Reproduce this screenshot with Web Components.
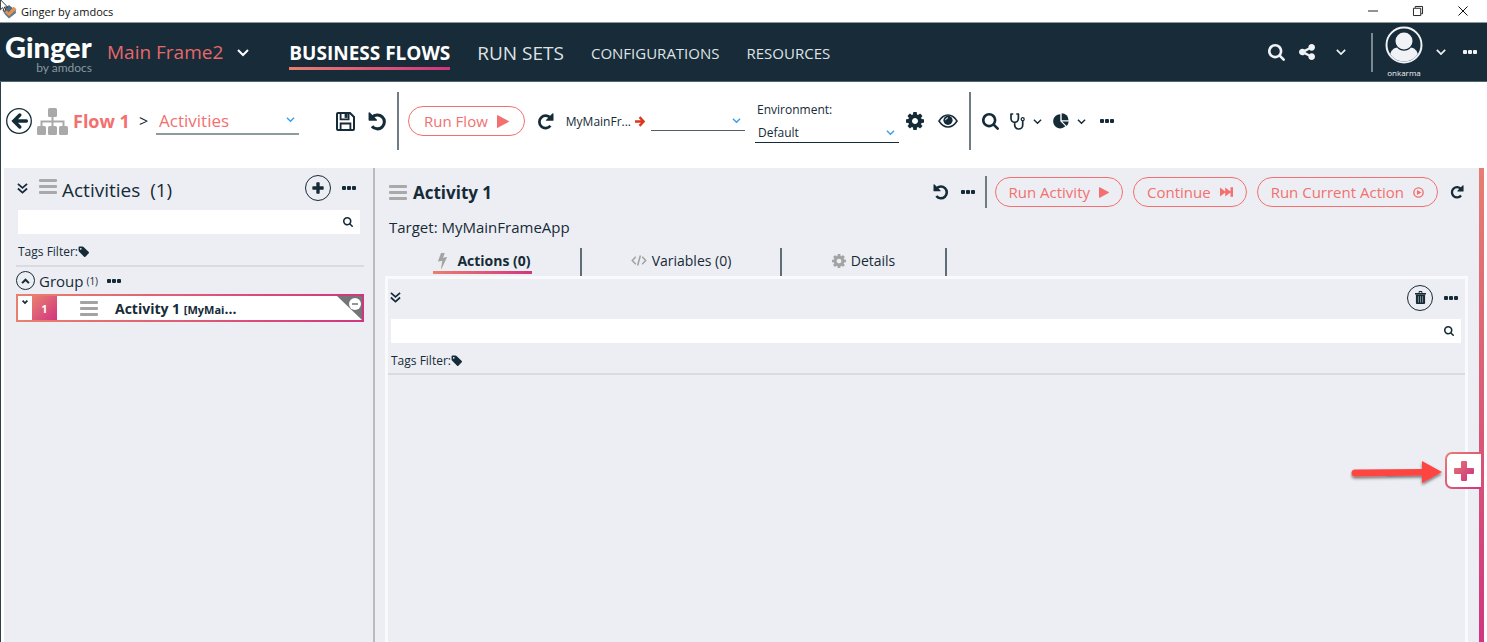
<!DOCTYPE html>
<html lang="en">
<head>
<meta charset="utf-8">
<title>Ginger by amdocs</title>
<style>
html, body { margin: 0; height: 100%; }
body {
  font-family: "Open Sans", "Noto Sans", sans-serif;
  color: #152b37;
  background: #fff;
  --ink: #152b37;
  --coral: #f2706f;
  --pane: #edeef3;
  --warm: #e9806f;
  --pink: #d1357f;
  --grad: linear-gradient(135deg, var(--warm), var(--pink));
}
</style>
</head>
<body>
<ginger-app></ginger-app>
<script>
const stroke = (w, d, extra = '') => `<path d="${d}" fill="none" stroke="currentColor" stroke-width="${w}" ${extra}/>`;
const COG = 'M1152 896q0-106-75-181t-181-75-181 75-75 181 75 181 181 75 181-75 75-181zm512-109v222q0 12-8 23t-20 13l-185 28q-19 54-39 91 35 50 107 138 10 12 10 25t-9 23q-27 37-99 108t-94 71q-12 0-26-9l-138-108q-44 23-91 38-16 136-29 186-7 28-36 28h-222q-14 0-24.5-8.5t-11.5-21.5l-28-184q-49-16-90-37l-141 107q-10 9-25 9-14 0-25-11-126-114-165-168-7-10-7-23 0-12 8-23 15-21 51-66.5t54-70.5q-27-50-41-99l-183-27q-13-2-21-12.5t-8-23.5v-222q0-12 8-23t19-13l186-28q14-46 39-92-40-57-107-138-10-12-10-24 0-10 9-23 26-36 98.5-107.5t94.5-71.5q13 0 26 10l138 107q44-23 91-38 16-136 29-186 7-28 36-28h222q14 0 24.5 8.5t11.5 21.5l28 184q49 16 90 37l142-107q9-9 24-9 13 0 25 10 129 119 165 170 7 8 7 22 0 12-8 23-15 21-51 66.5t-54 70.5q26 50 41 98l183 28q13 2 21 12.5t8 23.5z';
const ICONS = {
  search: ['64 128 1664 1664', '<path d="M1216 832q0-185-131.5-316.5t-316.5-131.5-316.5 131.5-131.5 316.5 131.5 316.5 316.5 131.5 316.5-131.5 131.5-316.5zm512 832q0 52-38 90t-90 38q-54 0-90-38l-343-342q-179 124-399 124-143 0-273.5-55.5t-225-150-150-225-55.5-273.5 55.5-273.5 150-225 225-150 273.5-55.5 273.5 55.5 225 150 150 225 55.5 273.5q0 220-124 399l343 343q37 37 37 90z"/>'],
  share: ['128 128 1536 1536', '<path d="M1344 1024q133 0 226.5 93.5t93.5 226.5-93.5 226.5-226.5 93.5-226.5-93.5-93.5-226.5q0-12 2-34l-360-180q-92 86-218 86-133 0-226.5-93.5t-93.5-226.5 93.5-226.5 226.5-93.5q126 0 218 86l360-180q-2-22-2-34 0-133 93.5-226.5t226.5-93.5 226.5 93.5 93.5 226.5-93.5 226.5-226.5 93.5q-126 0-218-86l-360 180q2 22 2 34t-2 34l360 180q92-86 218-86z"/>'],
  cog: ['128 128 1536 1536', `<path d="${COG}"/>`],
  tag: ['192 192 1452 1452', '<path d="M576 448q0-53-37.5-90.5t-90.5-37.5-90.5 37.5-37.5 90.5 37.5 90.5 90.5 37.5 90.5-37.5 37.5-90.5zm1067 576q0 53-37 90l-491 492q-39 37-91 37-53 0-90-37l-715-716q-38-37-64.5-101t-26.5-117v-416q0-52 38-90t90-38h416q53 0 117 26.5t102 64.5l715 714q37 39 37 91z"/>'],
  dots: ['0 0 14 4', '<rect width="4" height="4" rx="1"/><rect x="5" width="4" height="4" rx="1"/><rect x="10" width="4" height="4" rx="1"/>'],
  chevron: ['0 0 12 7', stroke(2, 'M1 1l5 5 5-5')],
  chevronup: ['0 0 10 7', stroke(2.4, 'M1 6l4-4 4 4')],
  fold: ['0 0 6 4', stroke(1.7, 'M.6.6L3 3 5.4.6')],
  double: ['0 0 12 12', stroke(1.9, 'M1 1l5 4.4L11 1M1 6l5 4.4L11 6')],
  menu: ['0 0 18 15', '<rect width="18" height="3" rx="1"/><rect y="6" width="18" height="3" rx="1"/><rect y="12" width="18" height="3" rx="1"/>'],
  back: ['0 0 26 26', '<circle cx="13" cy="13" r="12.3" fill="none" stroke="currentColor" stroke-width="1.3"/>' + stroke(3.4, 'M13.8 7l-6 6 6 6M8.4 13h12', 'stroke-linecap="round" stroke-linejoin="miter"')],
  sitemap: ['0 0 31 27', '<rect x="11" width="9" height="9" rx="1.5"/><rect y="18" width="9" height="9" rx="1.5"/><rect x="11" y="18" width="9" height="9" rx="1.5"/><rect x="22" y="18" width="9" height="9" rx="1.5"/>' + stroke(2, 'M15.5 8v11M4.5 19v-5.5h22V19')],
  save: ['0 0 19 19', stroke(2, 'M1 2q0-1 1-1h12l4 4v12q0 1-1 1H2q-1 0-1-1z') + stroke(1.8, 'M4.6 18v-6.5h9.8V18M4.6 1v6.3h8V1') + '<path d="M8.6 1.5h3v4.4h-3z"/>'],
  undo: ['0 0 20 20', stroke(3.2, 'M4.3 5.8A7.3 7.3 0 1 1 4.2 15') + '<path d="M.6.8v7.6q0 .8.8.8H9q1-.3.4-1L2 .6Q1-.2.6.8z"/>'],
  redo: ['0 0 20 20', '<g transform="translate(20 0) scale(-1 1)">' + stroke(3.2, 'M4.3 5.8A7.3 7.3 0 1 1 4.2 15') + '<path d="M.6.8v7.6q0 .8.8.8H9q1-.3.4-1L2 .6Q1-.2.6.8z"/></g>'],
  play: ['0 0 12 13', '<path d="M0 .6Q0-.2.8.2l10.800 5.800q.8.5 0 1L.8 12.800Q0 13.200 0 12.400z"/>'],
  forward: ['0 0 13 10', '<path d="M0 .5l5.200 4V.5l5.300 4V.3H13v9.400h-2.500V5.500l-5.300 4v-4L0 9.500z"/>'],
  playcircle: ['0 0 12 12', '<circle cx="6" cy="6" r="5.100" fill="none" stroke="currentColor" stroke-width="1.500"/><path d="M4.300 3.200L9.200 6l-4.900 2.800z"/>'],
  arrow: ['0 0 11 12', stroke(2.6, 'M0 6h9M5 1.200L9.500 6 5 10.800')],
  eye: ['0 0 20 14', stroke(1.5, 'M1 7q3.700-6 9-6t9 6q-3.700 6-9 6T1 7z') + '<circle cx="10" cy="6.300" r="4.600"/><path d="M7.600 6.200q0-2.200 2.400-2.400" fill="none" stroke="#fff" stroke-width="1"/>'],
  stetho: ['0 0 15 17', stroke(1.700, 'M3.200 1H1v4.500a3.700 3.900 0 0 0 7.400 0V1H6.300M4.700 9.500v2.700a4 3.800 0 0 0 8 0V8', 'stroke-linejoin="round"') + '<circle cx="12.700" cy="6.200" r="1.500" fill="none" stroke="currentColor" stroke-width="1.300"/>'],
  pie: ['0 0 16 16', '<path d="M7.300 1.200v7.100l5 5A7.100 7.100 0 1 1 7.300 1.200z"/><path d="M8.700.3a7 7 0 0 1 6.900 6.900H8.700z"/><path d="M9.200 8.500h6.500a7 7 0 0 1-2 4.500z"/>'],
  plus: ['0 0 18 18', '<path d="M6.500 1.500Q6.500.5 7.500.5h3q1 0 1 1v5h5q1 0 1 1v3q0 1-1 1h-5v5q0 1-1 1h-3q-1 0-1-1v-5h-5q-1 0-1-1v-3q0-1 1-1h5z"/>'],
  bolt: ['0 0 9 16', '<path d="M3 0h3.800L5 4.700l3.600-.6q.5 0 .2.600L3.700 15.500q-.5.700-.7 0l1.300-7.700-3.700.8q-.6 0-.5-.600z"/>'],
  code: ['0 0 17 12', stroke(1.700, 'M5 2L1.200 6 5 10M12 2l3.800 4L12 10M10 .5L7 11.500')],
  trash: ['0 0 12 14', '<path d="M4 2V.8Q4 0 4.800 0h2.400Q8 0 8 .8V2h4v1.600H0V2zM5 1v1h2V1zM1 4h10v9q0 1-1 1H2q-1 0-1-1z" fill-rule="evenodd"/><path d="M3.700 5.500v7M6 5.500v7M8.300 5.500v7" stroke="#9ba1a8" stroke-width=".9"/>'],
  min: ['0 0 11 11', stroke(1, 'M0 5.500h11')],
  restore: ['0 0 11 11', stroke(1, 'M.5 2.500h8v8h-8zM2.500 2V.5h8v8H9')],
  close: ['0 0 11 11', stroke(1.100, 'M.5.5l10 10M10.500.5l-10 10')],
  user: ['0 0 38 38', '<defs><clipPath id="c"><circle cx="19" cy="19" r="16.500"/></clipPath></defs><circle cx="19" cy="19" r="17.500" fill="none" stroke="currentColor" stroke-width="2"/><circle cx="19" cy="15" r="8.500"/><path clip-path="url(#c)" d="M4 34q1-12 8-12.500 3 3.300 7 3.300t7-3.300q7 .5 8 12.500-15 8-30 0z"/>'],
  brand: ['0 0 17 16', '<path d="M1.500 7L8.500 1l7.500 6-7.500 8z" fill="#4f7183"/><path d="M2.500 7l2.500-1.500 3 3.500L13.500 3l3 2.500L8.500 13z" fill="#ea9150"/><path d="M1.500 8.500l7 4.500 7-6 .5 2.500-7.500 6z" fill="#5f7f8e"/>'],
  cursor: ['0 0 11 16', '<path d="M.5-.5v12.500l2.800-2.600 2 4.600 2-.9-2-4.400h4z" fill="#fff" stroke="#111"/>']
};

function define(name, html, setup) {
  const t = document.createElement('template');
  t.innerHTML = `<style>*{box-sizing:border-box}:host{display:block}button,select,input{font:inherit;color:inherit;border:0;background:none;padding:0;margin:0;outline:0}button{display:flex;align-items:center;justify-content:center}a{color:inherit;text-decoration:none}h1,h2,p{margin:0;font-weight:400}</style>` + html;
  customElements.define(name, class extends HTMLElement {
    constructor() {
      super();
      this.attachShadow({ mode: 'open' }).append(t.content.cloneNode(true));
    }
    connectedCallback() { if (setup) setup(this, this.shadowRoot); }
  });
}

define('g-icon', `<style>:host{display:inline-flex;flex:none}svg{display:block;fill:currentColor;overflow:visible}</style><svg aria-hidden="true"></svg>`, (el, root) => {
  const [box, body] = ICONS[el.getAttribute('name')];
  const svg = root.querySelector('svg');
  const [, , w, h] = box.split(' ').map(Number);
  const width = Number(el.getAttribute('size') || w);
  svg.setAttribute('viewBox', box);
  svg.setAttribute('width', width);
  svg.setAttribute('height', Math.round(width * h / w));
  svg.innerHTML = body;
});

define('pill-button', `<style>
:host{display:block;flex:none}
button{height:30px;padding:0 var(--pill-pad,13px);gap:9px;border:1px solid var(--coral);border-radius:15px;color:var(--coral);font-size:15px;line-height:20px;white-space:nowrap}
</style><button><slot></slot></button>`);

define('line-select', `<style>
:host{display:block;position:relative;flex:none;border-bottom:1px solid #4f606a}
select{appearance:none;width:100%;height:100%;padding:0 20px 0 3px;display:block}
g-icon{position:absolute;right:4px;top:50%;margin-top:-3px;color:#3ba0ee;pointer-events:none}
</style><select><option></option></select><g-icon name="chevron" size="9"></g-icon>`, (el, root) => {
  root.querySelector('option').textContent = el.getAttribute('value') || '';
  root.querySelector('select').setAttribute('aria-label', el.getAttribute('label'));
});

define('search-box', `<style>
:host{display:block}
label{display:flex;align-items:center;height:24px;background:#fff;padding-right:7px}
input{flex:1;height:100%;padding:0 6px;font-size:12px}
</style><label><input type="text" aria-label="Search"><g-icon name="search" size="10"></g-icon></label>`);

define('tags-filter', `<style>
:host{display:flex;align-items:center;gap:1px;font-size:12px;line-height:18px}
</style><span>Tags Filter:</span><g-icon name="tag" size="10"></g-icon>`);

define('title-bar', `<style>
:host{display:flex;align-items:center;height:22px;background:#fff;color:#111;font-size:11px;position:relative;flex:none}
.brand{margin:0 4px 0 1px}
.cursor{position:absolute;left:0;top:0}
.win{margin-left:auto;display:flex;padding-right:2px}
.win button{width:45px;height:22px}
</style>
<g-icon class="brand" name="brand" size="16"></g-icon><span>Ginger by amdocs</span><g-icon class="cursor" name="cursor" size="9"></g-icon>
<div class="win"><button aria-label="Minimize"><g-icon name="min" size="10"></g-icon></button><button aria-label="Restore"><g-icon name="restore" size="10"></g-icon></button><button aria-label="Close"><g-icon name="close" size="10"></g-icon></button></div>`);

define('app-header', `<style>
:host{display:flex;align-items:center;height:60px;background:#172b38;border-top:1px solid #8e999f;border-bottom:1px solid #53636c;color:#dfe3e6;flex:none;padding-right:10px}
.logo{font-family:Lato,sans-serif;width:87px;margin-left:5px;white-space:nowrap}
.logo b{display:block;font-size:29px;line-height:32px;font-weight:900;color:#fff}
.logo small{display:block;font-size:12px;line-height:10px;color:#8b979f;text-align:right}
.solution{gap:14px;font-size:19px;color:#e8686a;margin-left:15px}
.solution g-icon{color:#fff}
nav{display:flex;align-items:center;gap:27px;margin-left:40px;font-size:15px;white-space:nowrap}
nav a{line-height:28px;border-bottom:3px solid transparent;padding-top:4px}
nav .big{font-size:19px}
nav .on{font-weight:700;color:#fff;border-image:linear-gradient(90deg,var(--warm),var(--pink)) 1}
.tools{margin-left:auto;display:flex;align-items:center;color:#f0f2f5}
.tools .bar{width:2px;height:39px;background:#7c888f;margin:0 12px 0 25px}
.user{display:flex;flex-direction:column;align-items:center;font-size:8px;line-height:10px;margin-right:13px}
</style>
<div class="logo"><b>Ginger</b><small>by amdocs</small></div>
<button class="solution">Main Frame2<g-icon name="chevron" size="12"></g-icon></button>
<nav><a class="big on" href="#flows">BUSINESS FLOWS</a><a class="big" href="#sets">RUN SETS</a><a href="#conf">CONFIGURATIONS</a><a href="#res">RESOURCES</a></nav>
<div class="tools">
<button aria-label="Search"><g-icon name="search" size="17"></g-icon></button>
<button aria-label="Share" style="margin:0 21px 0 14px"><g-icon name="share" size="16"></g-icon></button>
<button aria-label="More sharing"><g-icon name="chevron" size="10"></g-icon></button>
<span class="bar"></span>
<span class="user"><g-icon name="user" size="38"></g-icon><span style="padding-top:4px">onkarma</span></span>
<button aria-label="User menu" style="margin-right:17px"><g-icon name="chevron" size="10"></g-icon></button>
<button aria-label="More"><g-icon name="dots" size="14"></g-icon></button>
</div>`);

define('flow-toolbar', `<style>
:host{display:flex;align-items:center;height:86px;padding:0 0 8px 5px;flex:none;white-space:nowrap}
.flow{color:var(--coral);font-size:18px;font-weight:700;margin:0 9px 0 5px}
.sitemap{color:#a9a9a9;margin-left:5px}
.crumb{width:143px;height:28px;color:var(--coral);margin-left:8px;font-size:17px;border-bottom:2px solid #8d9b9c}
.bar{width:2px;height:58px;background:#6f7c84;flex:none}
.target{font-size:12px}
.env{display:flex;flex-direction:column;width:144px;font-size:12px;margin:2px 7px 0 10px}
.env span{line-height:17px;padding-left:2px}
.env line-select{height:20px;margin-top:5px;border-color:var(--ink)}
</style>
<button aria-label="Back"><g-icon name="back" size="26"></g-icon></button>
<g-icon class="sitemap" name="sitemap" size="31"></g-icon>
<span class="flow">Flow 1</span><span>&gt;</span>
<line-select class="crumb" label="Flow section" value="Activities"></line-select>
<button aria-label="Save" style="margin:0 13px 0 37px"><g-icon name="save" size="19"></g-icon></button>
<button aria-label="Undo"><g-icon name="undo" size="19"></g-icon></button>
<span class="bar" style="margin:0 9px 0 10px"></span>
<pill-button style="--pill-pad:15px">Run Flow<g-icon name="play" size="12"></g-icon></pill-button>
<button aria-label="Reset" style="margin:0 12px"><g-icon name="redo" size="17"></g-icon></button>
<span class="target">MyMainFr...</span><g-icon name="arrow" size="10" style="color:#d9391f;margin:0 6px 0 4px"></g-icon>
<line-select label="Agent" style="width:94px;height:20px"></line-select>
<div class="env"><span>Environment:</span><line-select label="Environment" value="Default"></line-select></div>
<button aria-label="Settings"><g-icon name="cog" size="18"></g-icon></button>
<button aria-label="View" style="margin:0 11px 0 14px"><g-icon name="eye" size="20"></g-icon></button>
<span class="bar" style="margin-right:11px"></span>
<button aria-label="Find"><g-icon name="search" size="17"></g-icon></button>
<button aria-label="Analyze" style="margin-left:11px;gap:8px"><g-icon name="stetho" size="15"></g-icon><g-icon name="chevron" size="9"></g-icon></button>
<button aria-label="Reports" style="margin:0 14px 0 11px;gap:8px"><g-icon name="pie" size="16"></g-icon><g-icon name="chevron" size="9"></g-icon></button>
<button aria-label="More"><g-icon name="dots" size="14"></g-icon></button>`);

define('activity-item', `<style>
:host{display:flex;height:28px;border:2px solid;border-image:linear-gradient(90deg,var(--warm),var(--pink)) 1;background:#fff;position:relative}
.fold{width:14px;padding-top:4px;display:flex;justify-content:center;align-items:flex-start}
.num{width:25px;background:var(--grad);color:#fff;font-size:11px;font-weight:700;display:flex;align-items:center;justify-content:center}
.menu{color:#a3a3a3;align-self:center;margin:0 17px 0 23px}
.name{font-size:14px;font-weight:700;line-height:26px;white-space:nowrap}
.name small{font-size:11px}
.corner{position:absolute;right:0;top:0;width:25px;height:24px}
</style>
<button class="fold" aria-label="Expand"><g-icon name="fold" size="6"></g-icon></button>
<span class="num">1</span><g-icon class="menu" name="menu" size="18"></g-icon>
<span class="name">Activity 1 <small>[MyMai</small>...</span>
<svg class="corner" viewBox="0 0 25 24"><path d="M0 0h25v24z" fill="#737577"/><circle cx="18" cy="8" r="6" fill="#fff"/><path d="M15 8h6" stroke="#737577" stroke-width="1.500"/></svg>`);

define('activities-pane', `<style>
:host{display:block;background:var(--pane);padding:0 9px 0 12px}
header{display:flex;align-items:center;height:42px;padding:0 8px 2px 1px}
h1{font-size:19px;line-height:28px;margin-top:3px}
.round{width:26px;height:26px;border:1px solid var(--ink);border-radius:50%;margin:0 11px 0 auto}
search-box{margin:0 4px 0 2px}
tags-filter{margin:9px 2px 4px}
.group{display:flex;align-items:center;height:29px;border-top:2px solid #dadbe0;font-size:15px}
.group button.up{width:19px;height:19px;border:1px solid var(--ink);border-radius:50%;margin-right:4px}
.group small{font-size:10px;margin:0 9px 0 3px}
</style>
<header><g-icon name="double" size="11"></g-icon><g-icon name="menu" size="18" style="color:#a9a9a9;margin:0 5px 3px 11px"></g-icon><h1>Activities&nbsp; (1)</h1>
<button class="round" aria-label="Add activity"><g-icon name="plus" size="12"></g-icon></button><button aria-label="More"><g-icon name="dots" size="14"></g-icon></button></header>
<search-box></search-box><tags-filter></tags-filter>
<div class="group"><button class="up" aria-label="Collapse group"><g-icon name="chevronup" size="9"></g-icon></button>Group<small>(1)</small><button aria-label="Group options"><g-icon name="dots" size="14"></g-icon></button></div>
<activity-item></activity-item>`);

define('actions-card', `<style>
:host{display:block;border:3px solid #fafafd;border-bottom:0;flex:1}
header{display:flex;align-items:center;justify-content:space-between;height:37px;padding:0 7px 0 2px}
.right{display:flex;align-items:center;gap:11px}
.round{width:26px;height:26px;border:1px solid var(--ink);border-radius:50%}
search-box{margin:3px 4px 9px 3px}
tags-filter{padding:0 3px 3px;border-bottom:2px solid #dadbe0}
</style>
<header><g-icon name="double" size="11"></g-icon><span class="right"><button class="round" aria-label="Delete all"><g-icon name="trash" size="11"></g-icon></button><button aria-label="More"><g-icon name="dots" size="14"></g-icon></button></span></header>
<search-box></search-box><tags-filter></tags-filter>`);

define('activity-tabs', `<style>
:host{display:flex;height:28px;font-size:14px}
a{display:flex;justify-content:center;border-right:2px solid #5f6d76;white-space:nowrap}
a.first{width:197px}a.second{width:200px}a.third{width:165px}
span{display:flex;align-items:center;gap:5px;height:26px;padding:2px 1px 0;border-bottom:3px solid transparent}
g-icon{color:#a3a3a3}
.on span{font-weight:700;padding-left:5px;gap:10px;border-image:linear-gradient(90deg,var(--warm),var(--pink)) 1}
</style>
<a class="first on" href="#actions"><span><g-icon name="bolt" size="9"></g-icon>Actions (0)</span></a>
<a class="second" href="#variables"><span><g-icon name="code" size="16"></g-icon>Variables (0)</span></a>
<a class="third" href="#details"><span><g-icon name="cog" size="14"></g-icon>Details</span></a>`);

define('activity-page', `<style>
:host{display:flex;flex-direction:column;background:var(--pane);padding:8px 11px 0 10px;min-width:0}
header{display:flex;align-items:center;height:32px;padding:0 4px;white-space:nowrap}
h2{font-size:17px;font-weight:700;margin-left:6px}
.acts{display:flex;align-items:center;margin-left:auto}
.bar{width:2px;height:32px;background:#6f7c84;margin:0 8px 0 10px}
.target{font-size:15px;line-height:20px;padding-left:4px;margin:9px 0 11px}
</style>
<header><g-icon name="menu" size="18" style="color:#a9a9a9"></g-icon><h2>Activity 1</h2>
<div class="acts"><button aria-label="Undo" style="margin-right:12px"><g-icon name="undo" size="16"></g-icon></button><button aria-label="More"><g-icon name="dots" size="14"></g-icon></button><span class="bar"></span>
<pill-button>Run Activity<g-icon name="play" size="10"></g-icon></pill-button>
<pill-button style="margin:0 10px">Continue<g-icon name="forward" size="13"></g-icon></pill-button>
<pill-button>Run Current Action<g-icon name="playcircle" size="11"></g-icon></pill-button>
<button aria-label="Reset" style="margin-left:12px"><g-icon name="redo" size="14"></g-icon></button></div></header>
<p class="target">Target: MyMainFrameApp</p>
<activity-tabs></activity-tabs>
<actions-card></actions-card>`);

define('add-rail', `<style>
:host{display:block;position:relative;width:5px;background:linear-gradient(180deg,#e67e72,#d85277 64%,var(--pink));margin-right:3px}
button{position:absolute;right:3px;top:284px;width:36px;height:37px;border:2px solid transparent;border-right:0;border-radius:7px 0 0 7px;background:linear-gradient(#fff,#fff) padding-box,var(--grad) border-box}
.pointer{position:absolute;right:40px;top:291px}
</style>
<button aria-label="Add action"><svg width="20" height="20" viewBox="0 0 20 20"><defs><linearGradient id="g" x2="1" y2="1"><stop stop-color="#e4776f"/><stop offset="1" stop-color="#cf2f82"/></linearGradient></defs><path d="M7 1q0-1 1-1h4q1 0 1 1v6h6q1 0 1 1v4q0 1-1 1h-6v6q0 1-1 1H8q-1 0-1-1v-6H1q-1 0-1-1V8q0-1 1-1h6z" fill="url(#g)"/></svg></button>
<svg class="pointer" width="94" height="28" viewBox="0 0 94 28"><defs><filter id="s" x="-10%" y="-30%" width="120%" height="180%"><feDropShadow dx="0" dy="2" stdDeviation="1.500" flood-opacity=".5"/></filter></defs><path filter="url(#s)" d="M5 10.500l67-.5V2l20 11L72 24v-7.500L5 17.500q-3.500-.3-3.500-3.500t3.500-3.500z" fill="#fd4543"/></svg>`);

define('ginger-app', `<style>
:host{display:flex;flex-direction:column;min-height:100vh}
main{flex:1;display:flex;flex-direction:column;border-left:1px solid #2c404c}
.work{flex:1;display:flex;align-items:stretch;padding-left:3px}
activities-pane{width:371px;flex:none;border-right:2px solid #b9bbc0}
activity-page{flex:1}
</style>
<title-bar></title-bar><app-header></app-header>
<main><flow-toolbar></flow-toolbar><div class="work"><activities-pane></activities-pane><activity-page></activity-page><add-rail></add-rail></div></main>`);
</script>
</body>
</html>
